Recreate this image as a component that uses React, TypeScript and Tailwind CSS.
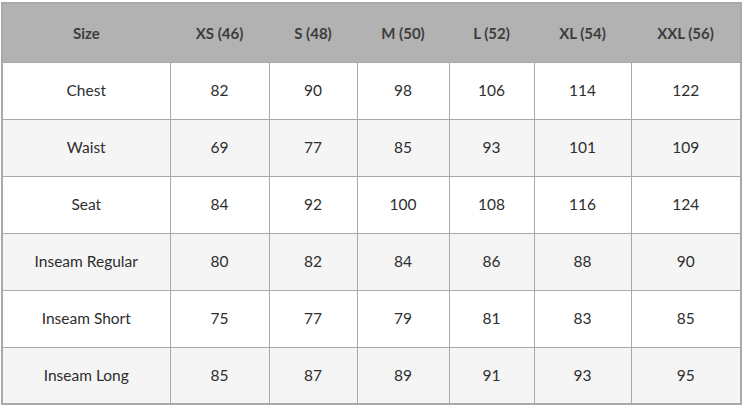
const headers = ['Size', 'XS (46)', 'S (48)', 'M (50)', 'L (52)', 'XL (54)', 'XXL (56)']
const widths = ['w-[168px]', 'w-[99px]', 'w-[88px]', 'w-[92px]', 'w-[85px]', 'w-[97px]', 'w-[110px]']

const rows: [string, number[]][] = [
  ['Chest', [82, 90, 98, 106, 114, 122]],
  ['Waist', [69, 77, 85, 93, 101, 109]],
  ['Seat', [84, 92, 100, 108, 116, 124]],
  ['Inseam Regular', [80, 82, 84, 86, 88, 90]],
  ['Inseam Short', [75, 77, 79, 81, 83, 85]],
  ['Inseam Long', [85, 87, 89, 91, 93, 95]],
]

export default function App() {
  return (
    <div className="h-[409px] w-[745px] bg-white pl-[1px] pt-[2px] font-['Lato',sans-serif]">
      <table className="w-[741px] table-fixed border-collapse border-2 border-[#a9a9a9] text-[15.5px]">
        <thead>
          <tr className="h-[59px] bg-[#b2b2b2]">
            {headers.map((h, i) => (
              <th key={h} className={`${widths[i]} text-center text-[15px] font-bold text-[#3d3d3d]`}>
                {h}
              </th>
            ))}
          </tr>
        </thead>
        <tbody>
          {rows.map(([label, values], r) => (
            <tr key={label} className={`h-[57px] ${r % 2 === 0 ? 'bg-white' : 'bg-[#f5f5f5]'}`}>
              <td className="border border-[#a9a9a9] text-center text-[#2e2e2e]">{label}</td>
              {values.map((v, i) => (
                <td key={i} className="border border-[#a9a9a9] text-center text-[#2e2e2e]">
                  {v}
                </td>
              ))}
            </tr>
          ))}
        </tbody>
      </table>
    </div>
  )
}
